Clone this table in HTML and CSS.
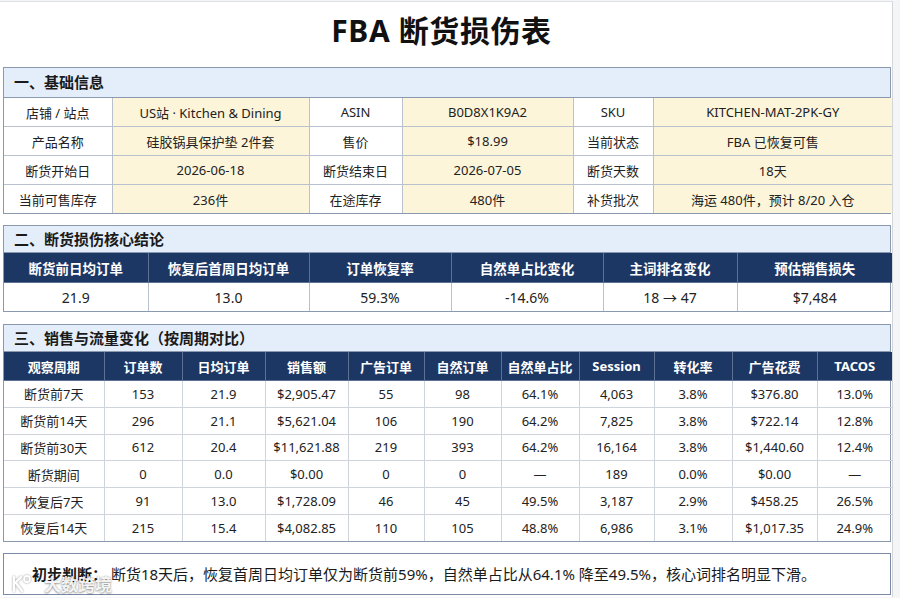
FILE: index.html
```html
<!DOCTYPE html>
<html lang="zh-CN">
<head>
<meta charset="utf-8">
<title>FBA 断货损伤表</title>
<link rel="stylesheet" href="styles.css">
</head>
<body>
<div class="page">
  <h1 class="title">FBA 断货损伤表</h1>

  <section class="sec sec-info">
    <div class="sec-head">一、基础信息</div>
    <table class="grid info">
      <colgroup><col style="width:108px"><col style="width:197px"><col style="width:93px"><col style="width:171px"><col style="width:80px"><col style="width:239px"></colgroup>
      <tr><td class="lbl">店铺 / 站点</td><td class="val">US站 · Kitchen &amp; Dining</td><td class="lbl">ASIN</td><td class="val">B0D8X1K9A2</td><td class="lbl">SKU</td><td class="val">KITCHEN-MAT-2PK-GY</td></tr>
      <tr><td class="lbl">产品名称</td><td class="val">硅胶锅具保护垫 2件套</td><td class="lbl">售价</td><td class="val">$18.99</td><td class="lbl">当前状态</td><td class="val">FBA 已恢复可售</td></tr>
      <tr><td class="lbl">断货开始日</td><td class="val">2026-06-18</td><td class="lbl">断货结束日</td><td class="val">2026-07-05</td><td class="lbl">断货天数</td><td class="val">18天</td></tr>
      <tr><td class="lbl">当前可售库存</td><td class="val">236件</td><td class="lbl">在途库存</td><td class="val">480件</td><td class="lbl">补货批次</td><td class="val">海运 480件，预计 8/20 入仓</td></tr>
    </table>
  </section>

  <section class="sec sec-core">
    <div class="sec-head">二、断货损伤核心结论</div>
    <table class="grid core">
      <colgroup><col style="width:144px"><col style="width:161px"><col style="width:142px"><col style="width:152px"><col style="width:134px"><col style="width:155px"></colgroup>
      <thead><tr><th>断货前日均订单</th><th>恢复后首周日均订单</th><th>订单恢复率</th><th>自然单占比变化</th><th>主词排名变化</th><th>预估销售损失</th></tr></thead>
      <tbody><tr><td>21.9</td><td>13.0</td><td>59.3%</td><td>-14.6%</td><td>18 → 47</td><td>$7,484</td></tr></tbody>
    </table>
  </section>

  <section class="sec sec-sales">
    <div class="sec-head">三、销售与流量变化（按周期对比）</div>
    <table class="grid sales">
      <colgroup><col style="width:100px"><col style="width:78px"><col style="width:83px"><col style="width:83px"><col style="width:76px"><col style="width:77px"><col style="width:78px"><col style="width:75px"><col style="width:78px"><col style="width:85px"><col style="width:75px"></colgroup>
      <thead><tr><th>观察周期</th><th>订单数</th><th>日均订单</th><th>销售额</th><th>广告订单</th><th>自然订单</th><th>自然单占比</th><th>Session</th><th>转化率</th><th>广告花费</th><th>TACOS</th></tr></thead>
      <tbody>
        <tr><td>断货前7天</td><td>153</td><td>21.9</td><td>$2,905.47</td><td>55</td><td>98</td><td>64.1%</td><td>4,063</td><td>3.8%</td><td>$376.80</td><td>13.0%</td></tr>
        <tr><td>断货前14天</td><td>296</td><td>21.1</td><td>$5,621.04</td><td>106</td><td>190</td><td>64.2%</td><td>7,825</td><td>3.8%</td><td>$722.14</td><td>12.8%</td></tr>
        <tr><td>断货前30天</td><td>612</td><td>20.4</td><td>$11,621.88</td><td>219</td><td>393</td><td>64.2%</td><td>16,164</td><td>3.8%</td><td>$1,440.60</td><td>12.4%</td></tr>
        <tr><td>断货期间</td><td>0</td><td>0.0</td><td>$0.00</td><td>0</td><td>0</td><td>—</td><td>189</td><td>0.0%</td><td>$0.00</td><td>—</td></tr>
        <tr><td>恢复后7天</td><td>91</td><td>13.0</td><td>$1,728.09</td><td>46</td><td>45</td><td>49.5%</td><td>3,187</td><td>2.9%</td><td>$458.25</td><td>26.5%</td></tr>
        <tr><td>恢复后14天</td><td>215</td><td>15.4</td><td>$4,082.85</td><td>110</td><td>105</td><td>48.8%</td><td>6,986</td><td>3.1%</td><td>$1,017.35</td><td>24.9%</td></tr>
      </tbody>
    </table>
  </section>

  <div class="note"><b>初步判断：</b> 断货18天后，恢复首周日均订单仅为断货前59%，自然单占比从64.1% 降至49.5%，核心词排名明显下滑。</div>

  <div class="watermark">
    <svg width="26" height="20" viewBox="0 0 26 20" aria-hidden="true"><path d="M4 3v14M4 10l7-7M6 9l6 8" fill="none" stroke="#fff" stroke-width="2.2" stroke-linecap="round"/><circle cx="17" cy="5" r="3" fill="none" stroke="#fff" stroke-width="1.8"/></svg>
    <span>大数跨境</span>
  </div>
</div>
</body>
</html>
```
FILE: styles.css
```css
html, body {
  margin: 0;
  padding: 0;
  background: #f4f5f7;
}
body {
  font-family: "Noto Sans", "Noto Sans CJK SC", sans-serif;
  color: #222;
  width: 900px;
  height: 598px;
  overflow: hidden;
}
.page {
  position: relative;
  width: 893px;
  height: 596px;
  margin-top: 1px;
  background: #fff;
  border-top: 1px solid #dedfe2;
  border-right: 1px solid #d4d6da;
  box-sizing: border-box;
  padding: 0 0 0 3px;
}
.title {
  margin: 0;
  height: 65px;
  line-height: 57px;
  text-align: center;
  font-size: 30px;
  font-weight: 700;
  color: #111;
  padding-right: 12px;
  letter-spacing: 0.6px;
}
.sec {
  width: 888px;
  border: 1px solid #8a98b0;
  box-sizing: border-box;
  background: #fff;
}
.sec + .sec { margin-top: 11px; }
.sec-sales { margin-top: 12px !important; }
.sec-head {
  background: #e4eefb;
  font-size: 15px;
  font-weight: 700;
  color: #1a1a1a;
  padding-left: 10px;
  border-bottom: 1px solid #8a98b0;
}
.sec-info .sec-head { height: 29px; line-height: 29px; }
.sec-core .sec-head, .sec-sales .sec-head { height: 26px; line-height: 26px; }
.grid {
  width: 100%;
  border-collapse: collapse;
  table-layout: fixed;
  font-size: 13px;
}
.grid td, .grid th {
  text-align: center;
  padding: 0;
  white-space: nowrap;
}
.grid tr > :first-child { border-left: none; }
.grid tr > :last-child { border-right: none; }
.grid tr:last-child td { border-bottom: none; }

/* info */
.info td { height: 28px; border: 1px solid #b9c1cf; }
.info tr:first-child td { border-top: none; }
.info .lbl { background: #fff; }
.info .val { background: #fdf5da; }

/* core */
.core th {
  background: #1d3764;
  color: #fff;
  font-weight: 700;
  height: 29px;
  font-size: 13.5px;
  border: 1px solid #5d7193;
  border-top: none;
}
.core td {
  height: 28px;
  font-size: 14px;
  border: 1px solid #b9c1cf;
  border-bottom: none;
}

/* sales */
.sales th {
  background: #1d3764;
  color: #fff;
  font-weight: 700;
  height: 28px;
  border: 1px solid #5d7193;
  border-top: none;
}
.sales td {
  height: 25.8px;
  border: 1px solid #cfd4dc;
}

.note {
  margin-top: 11px;
  width: 888px;
  height: 42px;
  box-sizing: border-box;
  border: 1px solid #7b8ba6;
  font-size: 15px;
  line-height: 40px;
  padding-left: 28px;
  color: #1a1a1a;
  white-space: nowrap;
}
.note b { font-weight: 700; }

.watermark {
  position: absolute;
  left: 10px;
  top: 569px;
  display: flex;
  align-items: center;
  gap: 8px;
  color: rgba(255,255,255,0.92);
  font-size: 17px;
  font-weight: 700;
  text-shadow: 0 0 2px rgba(0,0,0,0.35), 0 1px 2px rgba(0,0,0,0.3);
  pointer-events: none;
}
.watermark svg { filter: drop-shadow(0 0 1px rgba(0,0,0,0.4)); }
```
